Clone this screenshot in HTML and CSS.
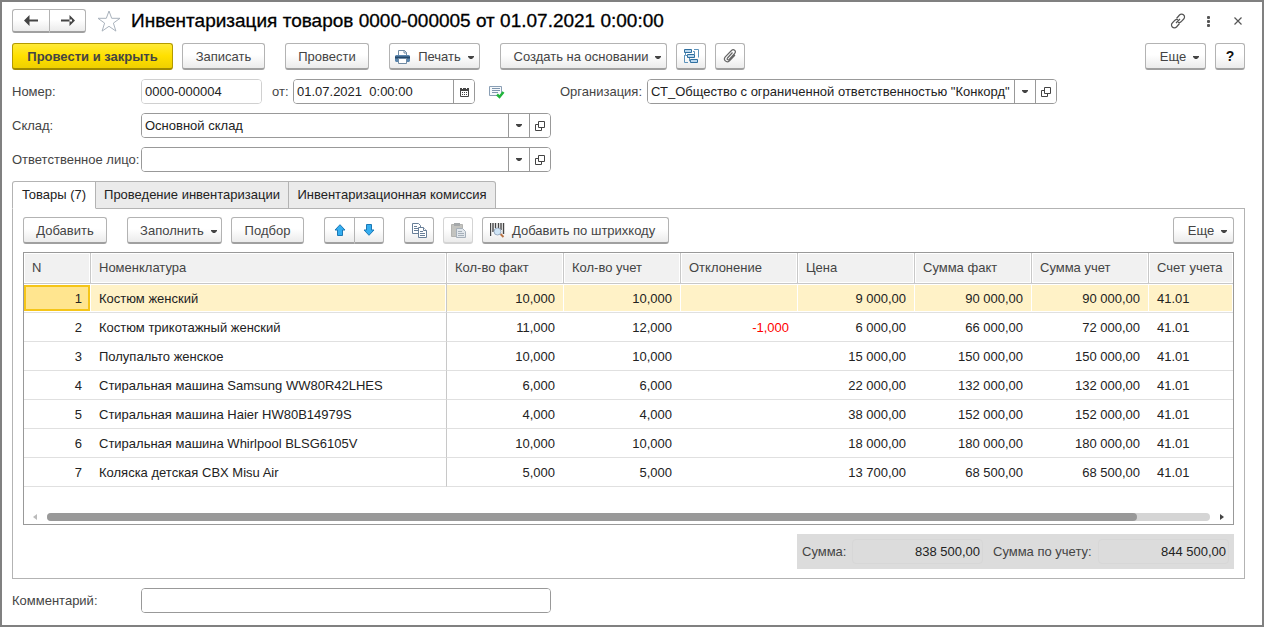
FILE: index.html
```html
<!DOCTYPE html>
<html lang="ru">
<head>
<meta charset="utf-8">
<title>Инвентаризация товаров</title>
<link rel="stylesheet" href="styles.css">
</head>
<body>
<svg class="defs" aria-hidden="true">
  <symbol id="caret" viewBox="0 0 6 3"><path d="M0 0h6v1L4 3H2L0 1z" fill="currentColor"/></symbol>
  <symbol id="open" viewBox="0 0 10 10"><path d="M3.500.5h6v6h-6zM3.500 3.500h-3v6h6v-3" fill="none" stroke="currentColor"/></symbol>
</svg>
<main class="window">
  <header class="titlebar">
    <div class="pair nav">
      <button class="btn" aria-label="Назад"><svg width="15" height="11" viewBox="0 0 15 11"><path d="M0 5.500L5.500 0v11zM3 4.500h11v2H3z" fill="#444"/></svg></button>
      <button class="btn" aria-label="Вперед"><svg width="15" height="11" viewBox="0 0 15 11"><path d="M15 5.500L9.500 0v11zM1 4.500h11v2H1z" fill="#444"/></svg></button>
    </div>
    <button class="plain" aria-label="В избранное"><svg width="24" height="22" viewBox="0 0 24 22"><path d="M12 1l2.700 7.300H23l-6.600 4.800 2.500 8L12 16.300 5.100 21.100l2.500-8L1 8.300h8.300z" fill="none" stroke="#a9b2bc"/></svg></button>
    <h1>Инвентаризация товаров 0000-000005 от 01.07.2021 0:00:00</h1>
    <div class="tools">
      <button class="plain" aria-label="Получить ссылку"><svg width="16" height="16" viewBox="0 0 16 16" fill="none" stroke="#555" stroke-width="1.200"><path d="M6.500 5.500l3-3.500a2.800 2.800 0 0 1 4.200 0 2.800 2.800 0 0 1 0 4L11 8.800a2.800 2.800 0 0 1-3 .5M9.500 10.500l-3 3.500a2.800 2.800 0 0 1-4.200 0 2.800 2.800 0 0 1 0-4L5 7.200a2.800 2.800 0 0 1 3-.5M6 10l4-4"/></svg></button>
      <button class="plain" aria-label="Меню"><svg width="3" height="11" viewBox="0 0 3 11" fill="#555"><rect width="3" height="3" rx="1"/><rect y="4" width="3" height="3" rx="1"/><rect y="8" width="3" height="3" rx="1"/></svg></button>
      <button class="plain" aria-label="Закрыть"><svg width="8" height="8" viewBox="0 0 8 8"><path d="M.5.5l7 7m0-7l-7 7" stroke="#555" stroke-width="1.200"/></svg></button>
    </div>
  </header>

  <div class="bar commands">
    <button class="btn primary">Провести и закрыть</button>
    <button class="btn save">Записать</button>
    <button class="btn post">Провести</button>
    <button class="btn print"><svg width="15" height="14" viewBox="0 0 15 14"><path d="M3.500 5V.5h6l2 2V5" fill="#fff" stroke="#6f8aa3"/><path d="M9 0v3h3" fill="none" stroke="#6f8aa3"/><path d="M1 5h13l1 1v5l-1 1H1l-1-1V6z" fill="#5b86ae"/><path d="M0 7.500h15" stroke="#24486b" stroke-width="2"/><path d="M3.500 8.500h8v5h-8z" fill="#fff" stroke="#6f8aa3"/></svg>Печать<svg class="caret"><use href="#caret"/></svg></button>
    <button class="btn base">Создать на основании<svg class="caret"><use href="#caret"/></svg></button>
    <button class="btn icon" aria-label="Структура подчиненности"><svg width="15" height="15" viewBox="0 0 15 15"><g fill="#b9d7ee" stroke="#2f6f9f"><path d="M.5.500h7v3h-7zM3.500 5.500h7v3h-7zM6.500 10.500h7v3h-7z"/></g><path d="M10 .500h4.500v8M.5 6v7.500H4M1.500 4v2.500h2M5.500 9v3h1M9 2.500h1.500V5" fill="none" stroke="#5d93bb"/></svg></button>
    <button class="btn icon" aria-label="Присоединенные файлы"><svg width="14" height="14" viewBox="0 0 14 14"><path d="M9.500 3.500l-5 5.500c-1 1.300.6 2.600 1.700 1.500l5.500-6c2-2.500-1.200-5-3.200-3L2.300 7.800c-2.500 3 1.200 6.700 4.200 4L12 6" fill="none" stroke="#666" stroke-width="1.200"/></svg></button>
    <button class="btn more push">Еще<svg class="caret"><use href="#caret"/></svg></button>
    <button class="btn icon help" aria-label="Справка">?</button>
  </div>

  <div class="form">
    <div class="row">
      <label class="lead" for="num">Номер:</label>
      <div class="field pale number"><input id="num" value="0000-000004" readonly></div>
      <label class="from" for="date">от:</label>
      <div class="field date"><input id="date" value="01.07.2021  0:00:00"><button aria-label="Календарь"><svg width="9" height="10" viewBox="0 0 9 10"><path d="M.5 1.500h8v8h-8z" fill="#fff" stroke="#444"/><path d="M0 1h9v3H0z" fill="#444"/><path d="M2.500 0v2M6.500 0v2" stroke="#fff"/><path d="M2 5.500h5M2 7.500h5" stroke="#444" stroke-dasharray="1 1"/></svg></button></div>
      <svg class="posted" width="16" height="14" viewBox="0 0 16 14"><path d="M.5 1.500h12v9H.5z" fill="#f6f9fc" stroke="#8a9fb5"/><path d="M3 3.500h8M3 5.500h8M3 7.500h6" stroke="#7e95ad"/><path d="M8 9.500l2.500 2.500L14.500 7" fill="none" stroke="#22b53c" stroke-width="2.500"/></svg>
      <label class="orglabel" for="org">Организация:</label>
      <div class="field org"><input id="org" value='СТ_Общество с ограниченной ответственностью "Конкорд"'><button aria-label="Выбрать"><svg class="caret"><use href="#caret"/></svg></button><button aria-label="Открыть"><svg class="open"><use href="#open"/></svg></button></div>
    </div>
    <div class="row">
      <label class="lead" for="store">Склад:</label>
      <div class="field wide"><input id="store" value="Основной склад"><button aria-label="Выбрать"><svg class="caret"><use href="#caret"/></svg></button><button aria-label="Открыть"><svg class="open"><use href="#open"/></svg></button></div>
    </div>
    <div class="row">
      <label class="lead" for="person">Ответственное лицо:</label>
      <div class="field wide"><input id="person"><button aria-label="Выбрать"><svg class="caret"><use href="#caret"/></svg></button><button aria-label="Открыть"><svg class="open"><use href="#open"/></svg></button></div>
    </div>
  </div>

  <div class="tabs" role="tablist">
    <button class="tab active t1" role="tab" aria-selected="true">Товары (7)</button>
    <button class="tab t2" role="tab">Проведение инвентаризации</button>
    <button class="tab t3" role="tab">Инвентаризационная комиссия</button>
  </div>

  <section class="panel">
    <div class="bar">
      <button class="btn add">Добавить</button>
      <button class="btn fill">Заполнить<svg class="caret"><use href="#caret"/></svg></button>
      <button class="btn pick">Подбор</button>
      <div class="pair move">
        <button class="btn" aria-label="Вверх"><svg width="12" height="12" viewBox="0 0 12 12"><path d="M6 .7l5 5.300H8.500v5.500h-5V6H1z" fill="#35aef0" stroke="#1c78b5"/></svg></button>
        <button class="btn" aria-label="Вниз"><svg width="12" height="12" viewBox="0 0 12 12"><path d="M6 11.300L11 6H8.500V.500h-5V6H1z" fill="#35aef0" stroke="#1c78b5"/></svg></button>
      </div>
      <button class="btn icon copy" aria-label="Скопировать"><svg width="15" height="15" viewBox="0 0 15 15" fill="#fff" stroke="#687f98"><path d="M.5.500h6l2 2v8h-8z"/><path d="M2 3.500h3M2 5.500h4M2 7.500h4"/><path d="M6.500 4.500h5l3 3v7h-8z"/><path d="M11.500 4.500v3h3M8 8.500h3M8 10.500h5M8 12.500h5"/></svg></button>
      <button class="btn icon" aria-label="Вставить" disabled><svg width="15" height="15" viewBox="0 0 15 15"><path d="M.5 1.500h11v12H.5z" fill="#c3c3bf" stroke="#b3b3b0"/><path d="M3 0h6v3H3z" fill="#a5a8aa"/><path d="M5.500 5.500h6l3 3v6h-9z" fill="#e2e7ec" stroke="#a6b0ba"/><path d="M7 8.500h4M7 10.500h6M7 12.500h6" stroke="#a6b0ba"/></svg></button>
      <button class="btn scan"><svg width="15" height="15" viewBox="0 0 15 15"><path d="M.5 0v13M3 0v9M5.500 0v5M8.500 0v5M11 0v7M13.500 0v11" stroke="#444" stroke-width="1.400"/><path d="M10.500 11l3 3" stroke="#b87345" stroke-width="2"/><circle cx="7.500" cy="8.500" r="3.500" fill="#cfe5f7" stroke="#9aabc0"/></svg>Добавить по штрихкоду</button>
      <button class="btn more push">Еще<svg class="caret"><use href="#caret"/></svg></button>
    </div>

    <div class="grid">
      <table>
        <colgroup><col class="c-n"><col><col class="c-v"><col class="c-v"><col class="c-v"><col class="c-v"><col class="c-v"><col class="c-v"><col class="c-a"></colgroup>
        <thead><tr><th>N</th><th>Номенклатура</th><th>Кол-во факт</th><th>Кол-во учет</th><th>Отклонение</th><th>Цена</th><th>Сумма факт</th><th>Сумма учет</th><th>Счет учета</th></tr></thead>
        <tbody>
          <tr class="current"><td>1</td><td>Костюм женский</td><td>10,000</td><td>10,000</td><td></td><td>9 000,00</td><td>90 000,00</td><td>90 000,00</td><td>41.01</td></tr>
          <tr><td>2</td><td>Костюм трикотажный женский</td><td>11,000</td><td>12,000</td><td class="neg">-1,000</td><td>6 000,00</td><td>66 000,00</td><td>72 000,00</td><td>41.01</td></tr>
          <tr><td>3</td><td>Полупальто женское</td><td>10,000</td><td>10,000</td><td></td><td>15 000,00</td><td>150 000,00</td><td>150 000,00</td><td>41.01</td></tr>
          <tr><td>4</td><td>Стиральная машина Samsung WW80R42LHES</td><td>6,000</td><td>6,000</td><td></td><td>22 000,00</td><td>132 000,00</td><td>132 000,00</td><td>41.01</td></tr>
          <tr><td>5</td><td>Стиральная машина Haier HW80B14979S</td><td>4,000</td><td>4,000</td><td></td><td>38 000,00</td><td>152 000,00</td><td>152 000,00</td><td>41.01</td></tr>
          <tr><td>6</td><td>Стиральная машина Whirlpool BLSG6105V</td><td>10,000</td><td>10,000</td><td></td><td>18 000,00</td><td>180 000,00</td><td>180 000,00</td><td>41.01</td></tr>
          <tr><td>7</td><td>Коляска детская CBX Misu Air</td><td>5,000</td><td>5,000</td><td></td><td>13 700,00</td><td>68 500,00</td><td>68 500,00</td><td>41.01</td></tr>
        </tbody>
      </table>
      <div class="scroll">
        <svg width="4" height="6" viewBox="0 0 4 6"><path d="M4 0v6L0 3z" fill="#bbb"/></svg>
        <div class="track"><div class="thumb"></div></div>
        <svg width="4" height="6" viewBox="0 0 4 6"><path d="M0 0v6l4-3z" fill="#444"/></svg>
      </div>
    </div>

    <div class="totals">
      <label for="sum">Сумма:</label><input id="sum" value="838 500,00" readonly>
      <label class="second" for="sum2">Сумма по учету:</label><input id="sum2" value="844 500,00" readonly>
    </div>
  </section>

  <div class="row comment">
    <label class="lead" for="comment">Комментарий:</label>
    <div class="field wide"><input id="comment"></div>
  </div>
</main>
</body>
</html>
```
FILE: styles.css
```css
* { box-sizing: border-box; }
body { margin: 0; background: #fff; }
body, button, input { font: 13px/16px "Liberation Sans", Arial, sans-serif; color: #444; }
button { padding: 0; cursor: pointer; }
svg { display: block; flex: none; }
.defs { display: none; }

.window { min-height: 100vh; padding: 7px 17px 12px 10px; border: 2px solid #808080; }

.titlebar { display: flex; align-items: center; height: 24px; }
.titlebar h1 { flex: 1; margin: 0 0 0 10px; font-size: 19px; line-height: 24px; font-weight: 400; color: #000; -webkit-text-stroke: 0.300px #000; white-space: nowrap; }
.plain { display: flex; border: 0; background: none; }
.nav { margin-right: 11px; }
.nav .btn { width: 37px; height: 24px; padding: 0; }
.tools { display: flex; align-items: center; gap: 24px; padding-right: 3px; }
.tools .plain:first-child { margin-right: -3px; }

.btn {
  display: flex; align-items: center; justify-content: center; height: 27px; padding-top: 1px;
  border: 1px solid #b3b3b3; border-bottom: 2px solid #a0a0a0; border-radius: 3px;
  background: linear-gradient(#fff 45%, #ebebeb); white-space: nowrap;
}
.btn:disabled { border-color: #d4d4d4; }
.caret { width: 6px; height: 3px; color: #444; }
.open { width: 10px; height: 10px; color: #444; }
.btn .caret { margin: 2px 0 0 7px; }
.pair { display: flex; }
.pair .btn:first-child { border-radius: 3px 0 0 3px; border-right: 0; }
.pair .btn:last-child { border-radius: 0 3px 3px 0; }

.bar { display: flex; }
.commands { margin-top: 10px; }
.primary { width: 161px; border-color: #b39a00; border-bottom-color: #a08a00; background: linear-gradient(#ffea38, #ffe000 50%, #efd000); font-weight: 700; }
.save { width: 83px; margin-left: 9px; }
.post { width: 84px; margin-left: 20px; }
.print { width: 91px; margin-left: 20px; }
.print svg:first-child { margin-right: 8px; }
.base { width: 167px; margin-left: 20px; padding-left: 8px; }
.icon { width: 30px; margin-left: 9px; padding-top: 0; }
.more { width: 61px; padding-left: 8px; }
.push { margin-left: auto; }
.help { font-size: 14px; font-weight: 700; color: #111; }

.form { display: grid; gap: 9px; margin-top: 9px; }
.row { display: flex; align-items: center; }
.lead { width: 129px; white-space: nowrap; }
.field { display: flex; height: 25px; border: 1px solid #999; border-radius: 4px; overflow: hidden; background: #fff; }
.field input { flex: 1; min-width: 0; padding: 0 3px; border: 0; color: #222; outline: 0; }
.field button { display: flex; width: 21px; align-items: center; justify-content: center; border: 0; border-left: 1px solid #999; background: #fff; }
.pale { border-color: #d0d0d0; }
.number { width: 121px; }
.from { width: 20px; margin: 0 1px 0 10px; }
.date { width: 182px; }
.posted { margin-left: 14px; }
.orglabel { margin-left: auto; padding-right: 5px; }
.org { width: 410px; margin-right: 188px; }
.wide { width: 410px; }

.tabs { display: flex; position: relative; z-index: 1; margin-top: 9px; }
.tab { height: 28px; border: 1px solid #b3b3b3; border-left: 0; background: #ebebeb; color: #222; white-space: nowrap; }
.tab.active { border-left: 1px solid #b3b3b3; border-bottom-color: #fff; border-radius: 3px 0 0 0; background: #fff; }
.t1 { width: 84px; }
.t2 { width: 193px; }
.t3 { width: 207px; border-radius: 0 3px 0 0; }

.panel { margin-top: -1px; padding: 8px 10px 9px; border: 1px solid #b3b3b3; }
.add { width: 84px; }
.fill { width: 95px; margin-left: 20px; padding-left: 8px; }
.pick { width: 73px; margin-left: 9px; }
.move { margin-left: 20px; }
.move .btn { width: 30px; padding: 0; }
.copy { margin-left: 20px; }
.scan { width: 187px; margin-left: 9px; padding-left: 7px; justify-content: flex-start; }
.scan svg { margin-right: 7px; }

.grid { margin-top: 8px; border: 1px solid #999; }
table { width: 100%; table-layout: fixed; border-collapse: separate; border-spacing: 0; }
.c-n { width: 67px; }
.c-v { width: 117px; }
.c-a { width: 84px; }
th { height: 31px; padding: 0 8px; border-right: 1px solid #c8c8c8; border-bottom: 1px solid #c8c8c8; background: #f1f1f1; box-shadow: inset 0 0 0 1px #fff; font-weight: 400; text-align: left; white-space: nowrap; }
th:last-child { border-right: 0; }
td { height: 29px; padding: 1px 9px 0 8px; border-bottom: 1px solid #e0e0e0; color: #222; text-align: right; white-space: nowrap; }
td:nth-child(2), td:last-child { text-align: left; }
td:nth-child(2) { border-right: 1px solid #c8c8c8; }
td.neg { color: #f00; }
.current td { background: #fff2c7; box-shadow: inset -1px 1px #fff, inset 0 -1px #fff; }
.current td:first-child { background: #ffe58f; box-shadow: inset 0 1px #fff, inset -1px -1px #fff, inset 2px 3px #f5c518, inset -3px -3px #f5c518; }
.scroll { display: flex; align-items: center; gap: 10px; height: 8px; margin: 26px 9px 3px; }
.track { flex: 1; height: 8px; border-radius: 4px; background: #d5d5d5; }
.thumb { width: 93.700%; height: 8px; border-radius: 4px; background: #999; }

.totals { display: flex; align-items: center; width: 437px; height: 35px; margin: 9px 0 0 auto; padding: 0 5px; background: #dcdcdc; }
.totals label { width: 50px; white-space: nowrap; }
.totals input { width: 131px; height: 25px; padding: 0 2px; border: 1px solid #d7d7d7; border-radius: 4px; background: #dcdcdc; color: #222; text-align: right; }
.totals .second { width: 105px; margin-left: 10px; }
.comment { margin-top: 9px; }
```
